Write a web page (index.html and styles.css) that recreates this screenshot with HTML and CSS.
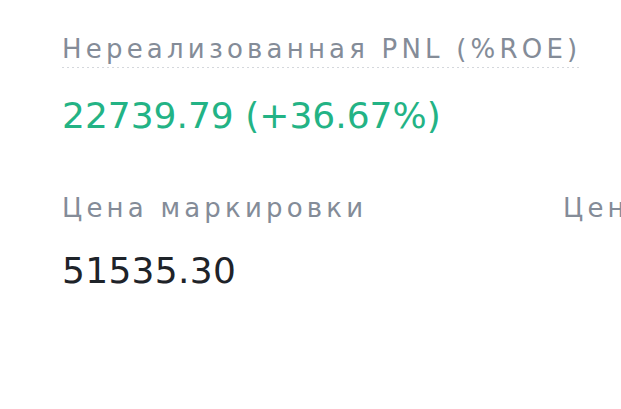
FILE: index.html
```html
<!DOCTYPE html>
<html lang="ru">
<head>
<meta charset="UTF-8">
<meta name="viewport" content="width=device-width, initial-scale=1.0">
<title>Позиция</title>
<link rel="stylesheet" href="styles.css">
</head>
<body>
  <div class="position">
    <div class="field">
      <span class="label dotted">Нереализованная PNL (%ROE)</span>
      <div class="value green">22739.79 (+36.67%)</div>
    </div>
    <div class="row">
      <div class="field">
        <span class="label">Цена маркировки</span>
        <div class="value">51535.30</div>
      </div>
      <div class="field">
        <span class="label">Цен</span>
      </div>
    </div>
  </div>
</body>
</html>
```

FILE: styles.css
```css
body {
  margin: 0;
  padding: 0;
  background-color: #fff;
  font-family: "DejaVu Sans", Roboto, sans-serif;
  overflow: hidden;
}
.position {
  padding: 34px 0 0 62px;
}
.field {
  display: flex;
  flex-direction: column;
  align-items: flex-start;
}
.label {
  font-size: 26px;
  line-height: 30px;
  color: #848c98;
  letter-spacing: 4.2px;
  white-space: nowrap;
}
.dotted {
  padding-bottom: 4px;
  background-image: linear-gradient(to right, #d4d7dc 50%, transparent 50%);
  background-size: 5px 1px;
  background-repeat: repeat-x;
  background-position: left bottom;
}
.value {
  margin-top: 26px;
  font-size: 36px;
  line-height: 44px;
  color: #1e2329;
  letter-spacing: 0.3px;
}
.green {
  color: #23b385;
  letter-spacing: 0;
}
.row {
  display: grid;
  grid-template-columns: 501px 200px;
  margin-top: 55px;
}
```
